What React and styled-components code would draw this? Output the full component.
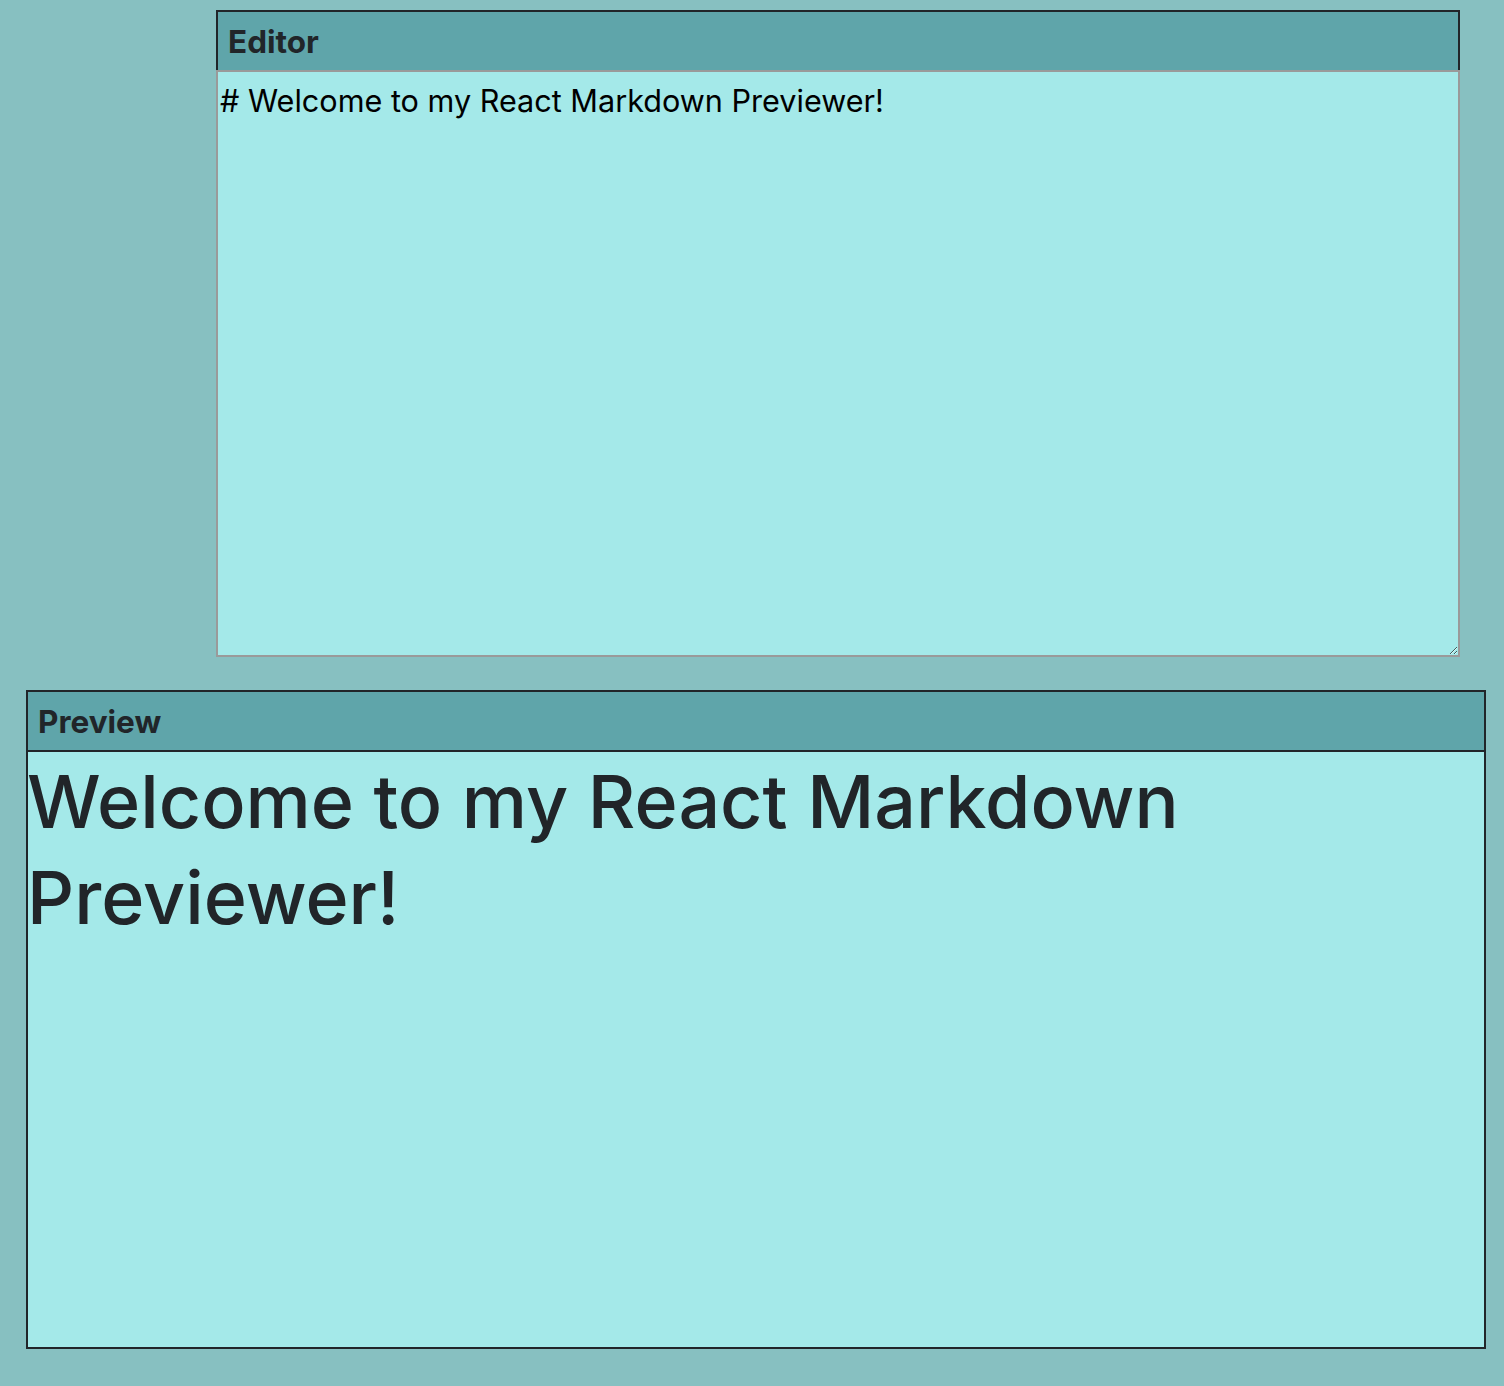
import React, { useState } from 'react';
import styled, { createGlobalStyle } from 'styled-components';

const GlobalStyle = createGlobalStyle`
  html, body {
    margin: 0;
    padding: 0;
    background-color: #87c0c1;
  }
  body {
    font-family: Inter, "Liberation Sans", sans-serif;
    color: #212529;
  }
`;

const Page = styled.div`
  display: flex;
  flex-direction: column;
  padding: 10px 18px 37px 26px;
  gap: 33px;
`;

const EditorWrap = styled.div`
  display: flex;
  flex-direction: column;
  margin-left: 190px;
  width: 1244px;
  align-self: flex-start;
`;

const Toolbar = styled.div`
  box-sizing: border-box;
  height: 60px;
  display: flex;
  align-items: center;
  padding: 0 10px;
  background-color: #5fa5aa;
  border: ${(p) => (p.$inside ? 'none' : '2px solid #212529')};
  border-bottom: ${(p) => (p.$inside ? '2px solid #212529' : 'none')};
  font-size: 31.5px;
  font-weight: 700;
  color: #212529;
`;

const Editor = styled.textarea`
  box-sizing: border-box;
  display: block;
  width: 100%;
  height: 587px;
  margin: 0;
  padding: 11px 2px 2px;
  background-color: #a4e9e9;
  border: 2px solid #9a9a9a;
  font-family: Inter, "Liberation Sans", sans-serif;
  font-size: 30.6px;
  line-height: 1.2;
  color: #000;
  outline: none;
`;

const PreviewWrap = styled.div`
  box-sizing: border-box;
  width: 1460px;
  height: 659px;
  display: flex;
  flex-direction: column;
  background-color: #a4e9e9;
  border: 2px solid #212529;
`;

const PreviewBody = styled.div`
  flex: 1;
  overflow: hidden;
  padding-top: 2px;
  h1 {
    margin: 0;
    margin-left: -1px;
    font-size: 73.5px;
    font-weight: 500;
    line-height: 96px;
    color: #212529;
  }
`;

export default function App() {
  const [text, setText] = useState('# Welcome to my React Markdown Previewer!');
  const heading = text.replace(/^#\s*/, '');

  return (
    <>
      <GlobalStyle />
      <Page>
        <EditorWrap>
          <Toolbar>Editor</Toolbar>
          <Editor value={text} onChange={(e) => setText(e.target.value)} />
        </EditorWrap>
        <PreviewWrap>
          <Toolbar $inside>Preview</Toolbar>
          <PreviewBody>
            <h1>{heading}</h1>
          </PreviewBody>
        </PreviewWrap>
      </Page>
    </>
  );
}
